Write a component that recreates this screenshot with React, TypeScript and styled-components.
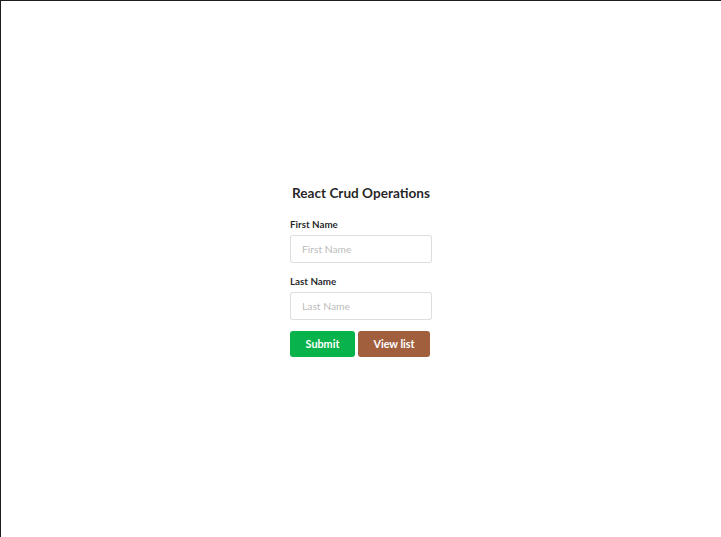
import React from "react";
import styled, { createGlobalStyle } from "styled-components";

const Global = createGlobalStyle`
  html, body { margin: 0; padding: 0; background: #fff; }
  body { font-family: Lato, "Open Sans", "Liberation Sans", sans-serif; color: rgba(0,0,0,0.87); }
  * { box-sizing: border-box; }
`;

const Page = styled.div`
  height: 537px;
  border-top: 1px solid #1e1e1e;
  border-left: 1px solid #1e1e1e;
  display: flex;
  flex-direction: column;
  align-items: center;
  justify-content: center;
  padding-top: 2px;
`;

const Title = styled.h2`
  margin: 0 0 16px;
  font-size: 13.6px;
  font-weight: 700;
  line-height: 18px;
  text-align: center;
`;

const Form = styled.form`
  width: 142px;
  display: flex;
  flex-direction: column;
`;

const Field = styled.div`
  display: flex;
  flex-direction: column;
  margin-bottom: 12px;
`;

const Label = styled.label`
  font-size: 9.8px;
  font-weight: 700;
  line-height: 12px;
  margin-bottom: 5px;
`;

const Input = styled.input`
  height: 28px;
  width: 100%;
  border: 1px solid rgba(34,36,38,0.15);
  border-radius: 3px;
  padding: 0 11px;
  font-family: inherit;
  font-size: 10.3px;
  color: rgba(0,0,0,0.87);
  outline: none;
  &::placeholder { color: rgba(175,175,175,0.87); }
`;

const Buttons = styled.div`
  display: flex;
  gap: 3px;
  margin-top: -1px;
`;

const Button = styled.button<{ $bg: string; $w: number }>`
  height: 26px;
  width: ${(p) => p.$w}px;
  border: none;
  border-radius: 3px;
  background: ${(p) => p.$bg};
  color: #fff;
  font-family: inherit;
  font-size: 10.8px;
  font-weight: 700;
  padding: 0;
  cursor: pointer;
`;

export default function App() {
  return (
    <>
      <Global />
      <Page>
        <Title>React Crud Operations</Title>
        <Form onSubmit={(e) => e.preventDefault()}>
          <Field>
            <Label>First Name</Label>
            <Input placeholder="First Name" />
          </Field>
          <Field>
            <Label>Last Name</Label>
            <Input placeholder="Last Name" />
          </Field>
          <Buttons>
            <Button type="submit" $bg="#07b34a" $w={65}>Submit</Button>
            <Button type="button" $bg="#a25f3e" $w={72}>View list</Button>
          </Buttons>
        </Form>
      </Page>
    </>
  );
}
